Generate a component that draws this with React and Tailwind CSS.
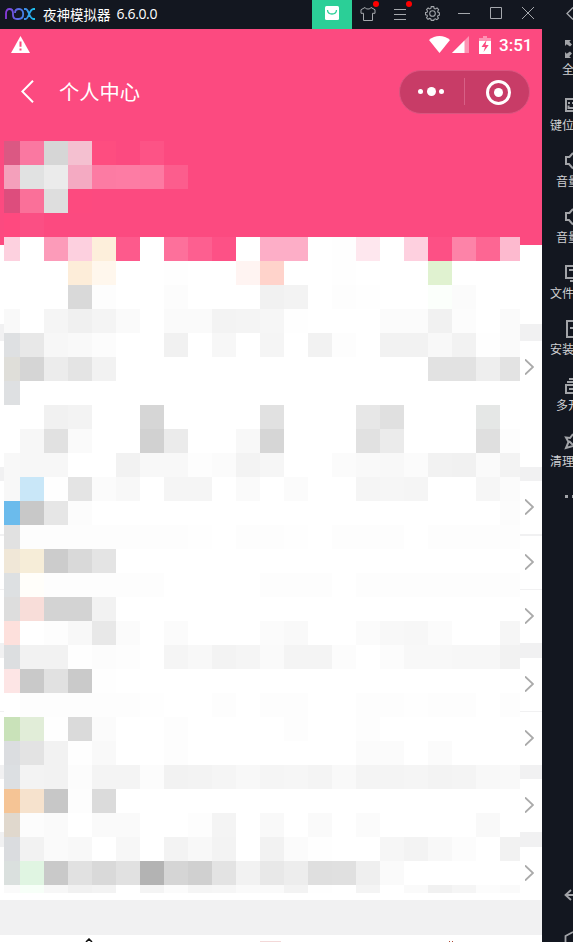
import React from "react";

// Tile colours per row as "column:colour"; two-digit values are grey levels.
const PINK_ROWS = [
  "0:db5883 1:fa78a1 2:d6d6d6 3:f4c0d0 4:fe4d80 6:fd5386",
  "0:f4a0bb 1:e1e2e2 2:ebebeb 3:f4aac2 4:fc7ba3 5:fd7ca4 6:fd7aa2 7:fc5d8d",
  "0:dd4d7d 1:fa7099 2:dedede 3:fd4a7f",
  "0:ff497f 1:fb4f84",
];
const LIGHT_ROWS = [
  "0:fdd1df 2:fc9bb9 3:fdd0df 4:fdefdb 5:fd5a8c 7:fd709b 8:fd5f90 9:fd5186 11:fdaec7 12:fdaec7 14:fe 15:fee7ee 17:fed0df 18:fd5085 19:fd83a8 20:fd6693 21:fdbacf",
  "3:fdedd9 4:fff7ed 7:fe 10:fff4f2 11:ffd3cb 14:fe 18:e0f2d0",
  "3:d9 4:fd 7:fc 11:f1 12:f3 14:fd 15:fe 18:fbfffb 19:fb",
  "0:f9 2:f5 3:f0 4:f4 5:fa 7:fa 8:fa 9:f3 10:f4 11:f6 12:fe 16:fb 17:fb 18:f1 19:fc 21:fa",
  "0:dee0e2 1:e8 2:f7 3:f9 4:fc 7:f1 9:f7 11:f5 13:f2 14:fd 16:f2 17:f2 18:f8 19:f2 20:fe 21:fa",
  "0:dfded9 1:d5 2:ec 3:e4 4:f2 18:e2 19:e2 20:ee 21:e3",
  "0:dee0e2",
  "2:f1 3:f3 6:d6 11:e1 15:e7 16:e0 20:e5e7e6",
  "1:f7 2:e1 3:fa 6:d1 7:eb 10:f8 11:d6 15:e1 16:eb 20:df 21:fd",
  "0:f8 1:f7 2:f7 5:f2 6:f8 7:f8 8:fd 9:fb 10:f3 11:f6 14:fb 15:f9 16:f8 17:fb 18:f2 19:f1 20:fa 21:f3",
  "0:f8 1:c9e7f8 2:fe 3:e4 4:fb 5:f8 7:f5 8:f5 10:fa 12:fb 15:f5 16:f6 17:f5 20:f6 21:fb",
  "0:6bbbec 1:c8 2:e6 3:fc 21:fc",
  "0:e1 1:fd 2:fd 3:fd 4:fd 5:fd 6:fd 7:fd 8:fe 10:fd 11:fd 12:fe 14:fd 15:fd 16:fd 18:fd 19:fd 20:fd 21:fd",
  "0:f0e7d7 1:f6edd8 2:cc 3:d9 4:e4",
  "0:dde0e2 1:fffefa 2:fd 3:fd 4:fd 5:fd 6:fd 11:fd 12:fd 13:fd 15:fd 16:fd 17:fd 18:fd 19:fd 20:fd 21:fd",
  "0:dd 1:f8ddd9 2:d3 3:d3 4:f2",
  "0:fde0dc 2:fd 3:f8 4:e8 5:fb 7:fb 11:fb 12:f9 15:fb 16:f8 17:f7 18:fb 21:f6",
  "0:dcdee0 1:f2 2:f2 3:fe 4:fc 5:fd 7:f5 8:f8 9:f3 10:f5 11:fa 12:f4 13:f4 14:fc 16:fc 17:f8 18:f8 19:f7 20:f7 21:f2",
  "0:fde5e5 1:c9 2:e1 3:ca 4:fe",
  "1:fd 2:fd 3:fd 4:fd 5:fd 6:fe 9:fd 11:fd 12:fd 15:fd 16:fd 17:fe 18:fd 19:fd 21:fd",
  "0:c9e2b9 1:e1edd8 2:fe 3:da 4:fb 7:fd 12:fd 15:fd",
  "0:dbdde0 1:e3 2:f2 3:fe 4:f9 7:fd 15:fb 16:fb 18:fb",
  "0:dcdfe2 1:f3 2:f2 3:fc 4:f4 5:f4 6:fc 7:f2 8:f3 9:f5 10:f8 11:f5 12:f6 13:f4 14:f9 15:f4 16:f4 17:f5 18:f3 19:f4 20:f8 21:f9",
  "0:f5c495 1:f6e2cd 2:c7 3:fd 4:db",
  "0:e0d8cd 1:fc 2:fa 4:fa 5:fa 8:fd 9:f4 11:f9 13:fa 15:fb 20:f9",
  "0:dadcdf 1:f2 2:fa 3:f8 5:f7 7:f3 8:f8 9:f3 11:f2 12:fb 13:fe 16:f6 17:f3 18:f8 19:fc 21:f2",
  "0:dae0de 1:e0f5e2 2:c9 3:e1 4:d9 5:e1 6:b3 7:d5 8:d0 9:e3 10:f2 11:e8 12:ed 13:df 14:e0 15:ef 16:fa",
  "0:fa 1:f7fff8 2:f7 3:f1 4:f3 6:f4 7:fb 8:f5 9:f6 10:fa 11:fa 12:f3 13:fe 15:f4 17:fa 18:f1 19:f5 20:fc 21:fa",
];

function parseRow(row, base) {
  const cells = Array(22).fill(base);
  row.split(" ").forEach((item) => {
    const [col, value] = item.split(":");
    cells[Number(col)] = "#" + (value.length === 2 ? value.repeat(3) : value);
  });
  return cells;
}

const TILE_ROWS = [
  ...PINK_ROWS.map((row) => parseRow(row, "#fc4a80")),
  ...LIGHT_ROWS.map((row) => parseRow(row, "#ffffff")),
];

function Mosaic() {
  return (
    <div className="absolute left-1 top-28 flex w-[516px] flex-col">
      {TILE_ROWS.map((cells, r) => (
        <div
          key={r}
          className="grid h-6 grid-cols-[16px_repeat(20,24px)_20px] last:h-2"
        >
          {cells.map((color, c) => (
            <div key={c} style={{ backgroundColor: color }} />
          ))}
        </div>
      ))}
    </div>
  );
}

function TitleBar() {
  return (
    <header className="flex h-[29px] shrink-0 items-center bg-[#131720] text-[#a5a8ad]">
      <svg className="mb-[2px] ml-[5px] h-[12px] w-[30px]" viewBox="0 0 30 12" fill="none" strokeWidth="1.8">
        <defs>
          <linearGradient id="brand" x1="0" x2="30" y1="0" y2="0" gradientUnits="userSpaceOnUse">
            <stop stopColor="#8d37dc" />
            <stop offset=".55" stopColor="#4c78e8" />
            <stop offset="1" stopColor="#19c5ee" />
          </linearGradient>
        </defs>
        <g stroke="url(#brand)">
          <path d="M1 11V5.5C1 2.4 2.4 1 4.5 1S8 2.4 8 5.5V7c0 2.8 1.6 4 4 4h1.5c3 0 4.7-2 4.7-5s-1.7-5-4.2-5-4 1.700-4 4" />
          <path d="M19 1h1.500C24 1 24 11 28.500 11H30M19 11h1.500C24 11 24 1 28.500 1H30" />
        </g>
      </svg>
      <div className="mb-[2px] ml-[8px] flex w-[269px] items-center gap-1 whitespace-nowrap text-[14px] leading-[20px] text-white">
        <span className="font-['Noto_Sans_CJK_SC',sans-serif] text-[13.5px]">夜神模拟器</span>
        <span className="ml-[2px] font-['Open_Sans',sans-serif] tracking-[-0.35px]">6.6.0.0</span>
      </div>
      <div className="flex h-[29px] w-10 items-center justify-center bg-[#2bcf97]">
        <svg className="mb-[3px] h-[14px] w-[14px]" viewBox="0 0 14 14" fill="none">
          <rect width="14" height="14" rx="1.500" fill="#fff" />
          <path d="M2.500 4c.3 5.300 8.700 5.300 9 0" stroke="#2bcf97" strokeWidth="1.300" />
        </svg>
      </div>
      <div className="relative flex h-[29px] w-8 items-center justify-center">
        <svg className="mb-[2px] h-[14px] w-4" viewBox="0 0 16 14" fill="none" stroke="currentColor">
          <path d="M5 .5 1 2.700v3.600h2.500v7.200h9V6.300H15V2.700L11 .5c-.5 2-5.500 2-6 0Z" />
        </svg>
        <span className="absolute right-[5px] top-[1px] h-[6px] w-[6px] rounded-full bg-[#ff0000]" />
      </div>
      <div className="relative flex h-[29px] w-8 items-center justify-center">
        <svg className="mb-[2px] h-3 w-3" viewBox="0 0 12 12" stroke="currentColor">
          <path d="M0 1.500h12M0 6.500h12M0 11.500h12" />
        </svg>
        <span className="absolute right-[4px] top-[1px] h-[6px] w-[6px] rounded-full bg-[#ff0000]" />
      </div>
      <div className="flex w-8 justify-center">
        <svg className="mb-[3px] h-[15px] w-[15px]" viewBox="0 0 24 24" fill="none" stroke="currentColor" strokeWidth="1.700">
          <path d="M10 1h4l.7 3 2 .8 2.600-1.600 2.500 2.600L20.300 8.500l.8 2 2.300.6v3.300l-2.500.6-.8 2 1.400 2.400-2.500 2.500-2.400-1.400-2 .8L14 23h-4l-.7-2.300-2-.8-2.500 1.400-2.400-2.500L3.900 16.500l-.8-2L.7 14v-3.500l2.500-.6.8-2-1.500-2.300 2.500-2.500 2.400 1.500 2-.8Z" />
          <circle cx="12" cy="12" r="4.500" />
        </svg>
      </div>
      <div className="flex w-8 justify-center">
        <svg className="mb-[3px] h-3 w-3" viewBox="0 0 12 12" stroke="currentColor"><path d="M0 6.500h12" /></svg>
      </div>
      <div className="flex w-8 justify-center">
        <svg className="mb-[3px] h-3 w-3" viewBox="0 0 12 12" fill="none" stroke="currentColor"><path d="M.5.5h11v11H.5z" /></svg>
      </div>
      <div className="flex w-8 justify-center">
        <svg className="mb-[3px] h-3 w-3" viewBox="0 0 12 12" stroke="currentColor"><path d="m0 0 12 12M12 0 0 12" /></svg>
      </div>
      <svg className="mb-[2px] ml-[22px] h-[13px] w-[7px] shrink-0" viewBox="0 0 7 13" fill="none" stroke="currentColor" strokeWidth="1.300">
        <path d="M7 .5 1 6.500l6 6" />
      </svg>
    </header>
  );
}

function StatusBar() {
  return (
    <div className="flex h-[31px] items-center text-white">
      <svg className="mb-[1px] ml-[11px] h-[17px] w-[19px]" viewBox="0 0 19 17">
        <path d="M9.500 0 19 17H0Z" fill="#fff" />
        <path d="M9.500 5.500v5.300M9.500 12.500v2" stroke="#fc4a80" strokeWidth="2" />
      </svg>
      <svg className="ml-[399px] h-[17px] w-[21px]" viewBox="0 0 21 17">
        <path d="M0 4C6-1.300 15-1.300 21 4L10.500 17Z" fill="#fff" />
      </svg>
      <svg className="ml-[2px] h-[17px] w-[17px]" viewBox="0 0 17 17">
        <path d="M17 0v17H0Z" fill="#fd92b3" />
        <path d="M12.500 4.500V17H0Z" fill="#fff" />
      </svg>
      <svg className="ml-[10px] h-[18px] w-3" viewBox="0 0 12 18">
        <path d="M4 0h4v2h4v4H0V2h4Z" fill="#fd92b3" />
        <path d="M0 5h12v13H0Z" fill="#fff" />
        <path d="M7.500 4 2.500 11H6l-1.500 5L9.700 9H6.500Z" fill="#fc4a80" />
      </svg>
      <span className="ml-[8px] mt-[1px] font-['Roboto',sans-serif] text-[17px] font-medium leading-5">3:51</span>
    </div>
  );
}

function NavBar() {
  return (
    <div className="flex h-[64px] items-center">
      <svg className="mb-[1px] ml-[21px] h-[23px] w-[13px]" viewBox="0 0 13 23" fill="none" stroke="#fff" strokeWidth="2">
        <path d="M12 .7 1.300 11.500 12 22.300" />
      </svg>
      <h1 className="mb-[3px] ml-[25px] w-[340px] font-['Noto_Sans_CJK_SC',sans-serif] text-[20.300px] font-normal leading-7 text-white">个人中心</h1>
      <div className="flex h-11 w-[131px] items-center rounded-full border border-[#da5580] bg-[#c83c67]">
        <div className="mb-[1px] flex h-[27px] w-[65px] items-center justify-center gap-[3.500px] border-r border-[#d86086] pr-[2px]">
          <i className="h-[5px] w-[5px] rounded-full bg-white" />
          <i className="h-[9px] w-[9px] rounded-full bg-white" />
          <i className="h-[5px] w-[5px] rounded-full bg-white" />
        </div>
        <div className="ml-[21px] flex h-[25px] w-[25px] items-center justify-center rounded-full border-[3px] border-white">
          <i className="h-[9px] w-[9px] rounded-full bg-white" />
        </div>
      </div>
    </div>
  );
}

function Row({ className }) {
  return (
    <div className={"flex shrink-0 items-center justify-end bg-white pr-2 " + className}>
      <svg className="mb-[1px] h-4 w-[9px]" viewBox="0 0 9 16" fill="none" stroke="#aaa" strokeWidth="1.900">
        <path d="m0 .5 8 7.500-8 7.500" />
      </svg>
    </div>
  );
}

function Phone() {
  return (
    <main className="relative flex h-[913px] w-[542px] shrink-0 flex-col overflow-hidden bg-[#f1f1f2]">
      <section className="h-[216px] shrink-0 bg-[#fc4a80]">
        <StatusBar />
        <NavBar />
      </section>
      <section className="h-[79px] shrink-0 bg-white" />
      <section className="mt-[17px] h-[126px] shrink-0 bg-white">
        <Row className="h-[53px]" />
      </section>
      <section className="mt-[14px] flex shrink-0 flex-col">
        <Row className="h-[53px]" />
        <Row className="mt-[2px] h-[53px]" />
        <Row className="mt-px h-[53px]" />
      </section>
      <section className="mt-[15px] flex shrink-0 flex-col">
        <Row className="h-[53px]" />
        <Row className="mt-px h-[53px]" />
      </section>
      <section className="mt-[14px] shrink-0"><Row className="h-[53px]" /></section>
      <section className="mt-[15px] shrink-0"><Row className="h-[53px]" /></section>
      <nav className="mt-[35px] flex h-[7px] shrink-0 items-end bg-white">
        <svg className="ml-[85px] h-1 w-2" viewBox="0 0 8 4" fill="none" stroke="#111" strokeWidth="1.500"><path d="m1 4 3-3 3 3" /></svg>
        <i className="ml-[167px] h-px w-[21px] bg-[#f3d9d9]" />
        <i className="ml-[168px] h-px w-px bg-[#b04a35]" />
        <i className="ml-[2px] h-px w-px bg-[#b04a35]" />
      </nav>
      <Mosaic />
    </main>
  );
}

const SPEAKER = <path d="M9 2 5.500 6H2v7h3l4 4.500" />;

const TOOLS = [
  {
    label: "全",
    inset: "pl-[20px]",
    icon: (
      <>
        <path d="M1 1h6L5.300 2.700 8 5.500 6 7.500 2.700 5.300 1 7ZM1 19h6l-1.700-1.700L8 14.500l-2-2-3.300 2.200L1 13Z" fill="currentColor" stroke="none" />
      </>
    ),
  },
  { label: "键位", inset: "pl-[8px]", icon: <path d="M9 4H2v12h7M4 8h2M4.500 10.500V13H9M8 8h1" /> },
  { label: "音量", inset: "pl-[14px]", icon: SPEAKER },
  { label: "音量", inset: "pl-[14px]", icon: SPEAKER },
  { label: "文件", inset: "pl-[8px]", icon: <path d="M9 3H2v12h7M5 7h4M6 18h3" /> },
  { label: "安装", inset: "pl-[8px]", icon: <path d="M9 2H3v16h6M6 9h3" /> },
  { label: "多开", inset: "pl-[14px]", icon: <path d="M9 10H2v8h7M5 14h4M3 7h6M5 4h4" /> },
  { label: "清理", inset: "pl-[8px]", icon: <path d="m9 3-3 4-4-.5 2.500 4.500L2 17l7-2M5 10l4 4" /> },
];

function ToolRail() {
  return (
    <aside className="flex h-[913px] w-[31px] flex-col overflow-hidden bg-[#131720] pt-[10px] text-[#a2a4a8]">
      {TOOLS.map((tool, i) => (
        <div key={i} className="flex h-14 shrink-0 flex-col">
          <svg className="ml-[22px] h-[20px] w-[9px] shrink-0" viewBox="0 0 9 20" fill="none" stroke="currentColor" strokeWidth="2">
            {tool.icon}
          </svg>
          <span
            className={
              "mt-[2px] whitespace-nowrap font-['Noto_Sans_CJK_SC',sans-serif] text-[12px] leading-4 text-[#d0d1d3] " +
              tool.inset
            }
          >
            {tool.label}
          </span>
        </div>
      ))}
      <div className="ml-[23px] mt-[8px] flex shrink-0 gap-[4px]">
        <i className="h-[3px] w-[3px] shrink-0 bg-[#a2a4a8]" />
        <i className="h-[3px] w-[3px] shrink-0 bg-[#a2a4a8]" />
      </div>
      <svg className="ml-[22px] mt-auto h-3 w-[9px] shrink-0" viewBox="0 0 9 12" fill="none" stroke="currentColor" strokeWidth="1.800">
        <path d="M7 1 1.500 6 7 11M1.500 6H9" />
      </svg>
      <svg className="ml-[22px] mt-[30px] h-[11px] w-[9px] shrink-0" viewBox="0 0 9 11" fill="none" stroke="currentColor" strokeWidth="1.800">
        <path d="M9 1 1.500 5v6" />
      </svg>
    </aside>
  );
}

export default function App() {
  return (
    <div className="flex h-[942px] w-[573px] flex-col overflow-hidden bg-[#131720]">
      <TitleBar />
      <div className="flex">
        <Phone />
        <ToolRail />
      </div>
    </div>
  );
}
